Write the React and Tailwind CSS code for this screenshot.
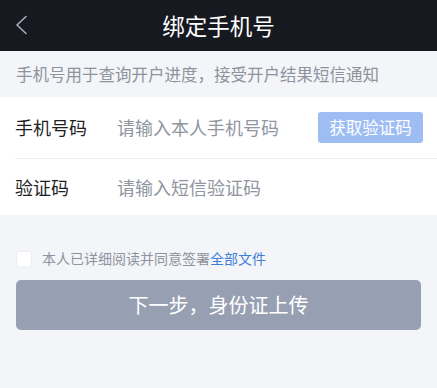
import { useState } from 'react';

const FONT = { fontFamily: '"Noto Sans CJK SC", "Noto Sans", sans-serif' };

export default function App() {
  const [agreed, setAgreed] = useState(false);

  return (
    <div className="w-[437px] h-[388px] bg-[#f3f5f9] overflow-hidden" style={FONT}>
      {/* nav bar */}
      <div className="relative h-[51px] bg-[#161920] flex items-center justify-center">
        <button className="absolute left-[14px] top-[15px] w-[16px] h-[20px]">
          <svg width="16" height="20" viewBox="0 0 16 20" fill="none">
            <path d="M12 1.5L3 10l9 8.5" stroke="#a9adb6" strokeWidth="1.6" strokeLinecap="round" strokeLinejoin="round" />
          </svg>
        </button>
        <h1 className="text-[22.5px] text-white leading-none">绑定手机号</h1>
      </div>

      <div className="h-[46px] flex items-center px-[16px] text-[16.5px] text-[#8e939d]">
        手机号用于查询开户进度，接受开户结果短信通知
      </div>

      {/* form */}
      <div className="bg-white">
        <div className="ml-[15px] h-[62px] flex items-center border-b border-[#eeeff2] pr-[14px]">
          <span className="w-[102px] text-[18px] text-[#1f1f1f]">手机号码</span>
          <input type="tel" placeholder="请输入本人手机号码" className="flex-1 min-w-0 text-[18px] outline-none placeholder:text-[#90959f]" />
          <button className="w-[105px] h-[31px] rounded-[3px] bg-[#9dbdf3] text-white text-[16.5px]">获取验证码</button>
        </div>
        <div className="ml-[15px] h-[56px] flex items-center">
          <span className="w-[102px] text-[18px] text-[#1f1f1f]">验证码</span>
          <input type="text" placeholder="请输入短信验证码" className="flex-1 min-w-0 text-[18px] outline-none placeholder:text-[#90959f]" />
        </div>
      </div>

      <label className="mt-[33px] px-[16px] flex items-center gap-[10px] text-[14px] text-[#8e939d]">
        <input type="checkbox" checked={agreed} onChange={(e) => setAgreed(e.target.checked)} className="appearance-none w-[16px] h-[16px] rounded-[3px] bg-white border border-[#eceef2] checked:bg-[#4a8ae6]" />
        <span>本人已详细阅读并同意签署<span className="text-[#3f7fd6]">全部文件</span></span>
      </label>

      <div className="px-[16px] mt-[11px]">
        <button className="w-full h-[50px] rounded-[5px] bg-[#97a0b2] text-white text-[20px]">下一步，身份证上传</button>
      </div>
    </div>
  );
}
